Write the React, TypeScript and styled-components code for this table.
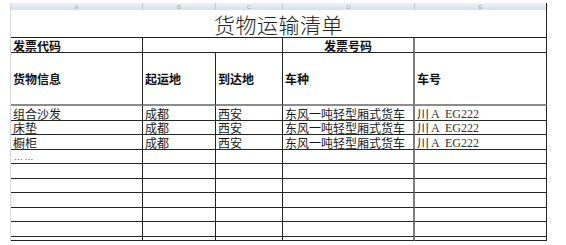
import React from "react";
import styled, { createGlobalStyle, css } from "styled-components";

const Global = createGlobalStyle`
  html, body { margin: 0; padding: 0; background: #fff; }
  body { font-family: "Liberation Serif", "Noto Sans CJK SC", serif; }
`;

const Page = styled.div`
  padding: 3px 0 0 10px;
  width: 566px;
  height: 245px;
  box-sizing: border-box;
  overflow: hidden;
`;

const Sheet = styled.div`
  display: grid;
  grid-template-columns: 132px 73px 67px 132px 132px;
  grid-template-rows: 7px 28px 15px 53px repeat(9, 14.5px) 4px;
  width: 536px;
  border-left: 1px solid #d4d8de;
  box-sizing: border-box;
`;

const HeadLetter = styled.div<{ $last?: boolean }>`
  background: linear-gradient(#eef2f8, #d6dfeb);
  border-right: 1px solid ${(p) => (p.$last ? "#222" : "#c3cad4")};
  overflow: hidden;
  display: flex;
  justify-content: center;
  align-items: center;
  font-family: "Liberation Sans", sans-serif;
  font-size: 6px;
  line-height: 6px;
  color: #a3abb6;
`;

const Title = styled.div`
  grid-column: span 5;
  border-right: 1px solid #222;
  border-bottom: 1px solid #222;
  display: flex;
  justify-content: center;
  align-items: center;
  font-family: "Noto Sans CJK SC", sans-serif;
  font-weight: 300;
  font-size: 21px;
  letter-spacing: 0.5px;
  color: #222;
  padding-top: 1px;
`;

const Cell = styled.div<{
  $span?: number;
  $bold?: boolean;
  $center?: boolean;
  $middle?: boolean;
  $thickRight?: boolean;
  $thickBottom?: boolean;
  $noBottom?: boolean;
}>`
  grid-column: span ${(p) => p.$span ?? 1};
  box-sizing: border-box;
  border-right: ${(p) => (p.$thickRight ? "2px solid #7d7d7d" : "1px solid #222")};
  border-bottom: ${(p) =>
    p.$noBottom ? "none" : p.$thickBottom ? "2px solid #8c8c8c" : "1px solid #262626"};
  display: flex;
  align-items: ${(p) => (p.$middle ? "center" : "flex-end")};
  justify-content: ${(p) => (p.$center ? "center" : "flex-start")};
  padding: 0 2px;
  font-family: "Noto Sans CJK SC", sans-serif;
  font-size: 12px;
  line-height: 12px;
  color: #1a1a1a;
  white-space: nowrap;
  overflow: hidden;
  ${(p) =>
    p.$bold &&
    css`
      font-weight: 700;
      color: #111;
    `}
`;

const Latin = styled.span`
  font-family: "Liberation Serif", serif;
  font-size: 12px;
  margin-left: 2px;
  word-spacing: 3px;
  color: #333;
`;

const Dots = styled.span`
  font-family: "Liberation Sans", sans-serif;
  font-size: 9px;
  letter-spacing: -0.5px;
  color: #444;
  padding-left: 1px;
`;

const rows = [
  ["组合沙发", "成都", "西安", "东风一吨轻型厢式货车"],
  ["床垫", "成都", "西安", "东风一吨轻型厢式货车"],
  ["橱柜", "成都", "西安", "东风一吨轻型厢式货车"],
];

export default function App() {
  const letters = ["A", "B", "C", "D", "E"];
  const emptyRows = 6;
  return (
    <>
      <Global />
      <Page>
        <Sheet>
          {letters.map((l, i) => (
            <HeadLetter key={l} $last={i === 4}>
              {l}
            </HeadLetter>
          ))}
          <Title>货物运输清单</Title>

          <Cell $bold>发票代码</Cell>
          <Cell $span={2} />
          <Cell $bold $center $thickRight>
            发票号码
          </Cell>
          <Cell />

          <Cell $bold $middle $thickBottom>
            货物信息
          </Cell>
          <Cell $bold $middle $thickBottom>
            起运地
          </Cell>
          <Cell $bold $middle $thickBottom>
            到达地
          </Cell>
          <Cell $bold $middle $thickBottom $thickRight>
            车种
          </Cell>
          <Cell $bold $middle $thickBottom>
            车号
          </Cell>

          {rows.map((r, i) => (
            <React.Fragment key={i}>
              <Cell>{r[0]}</Cell>
              <Cell>{r[1]}</Cell>
              <Cell>{r[2]}</Cell>
              <Cell $thickRight>{r[3]}</Cell>
              <Cell>
                川<Latin>A EG222</Latin>
              </Cell>
            </React.Fragment>
          ))}

          <Cell>
            <Dots>… …</Dots>
          </Cell>
          <Cell />
          <Cell />
          <Cell $thickRight />
          <Cell />

          {Array.from({ length: emptyRows }).map((_, i) => (
            <React.Fragment key={`e${i}`}>
              <Cell />
              <Cell />
              <Cell />
              <Cell $thickRight />
              <Cell />
            </React.Fragment>
          ))}
          <Cell $noBottom />
          <Cell $noBottom />
          <Cell $noBottom />
          <Cell $noBottom $thickRight />
          <Cell $noBottom />
        </Sheet>
      </Page>
    </>
  );
}
